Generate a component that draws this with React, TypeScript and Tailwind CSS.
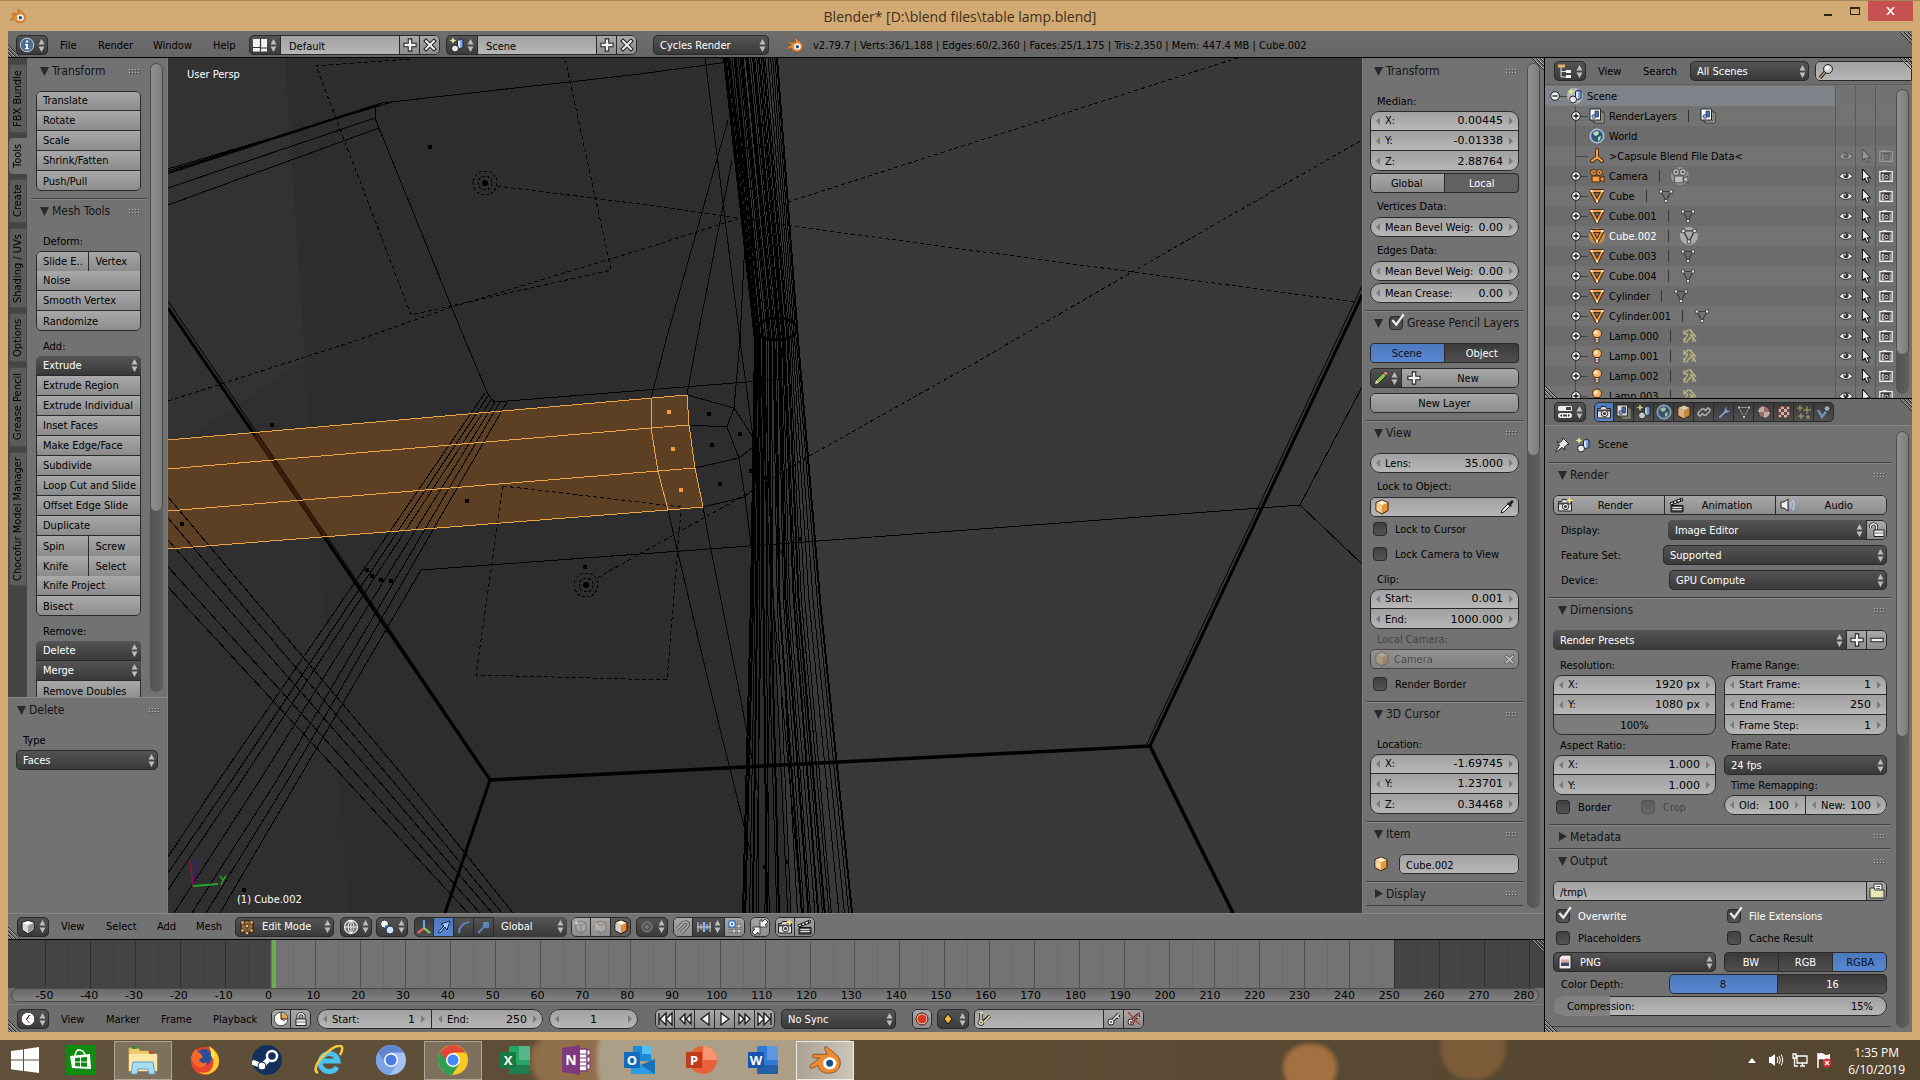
import type { ReactNode } from "react";

/* ---------- shared class strings ---------- */

const EDGE = "outline outline-1 -outline-offset-1 outline-[#2a2a2a]";
const BTN = "bg-gradient-to-b from-[#a9a9a9] to-[#8b8b8b] text-black";
const NUM = "bg-gradient-to-b from-[#a0a0a0] to-[#b8b8b8] text-black";
const MENU = "bg-gradient-to-b from-[#555] to-[#393939] text-white";
const BLUE = "bg-gradient-to-b from-[#4c78bd] to-[#5a87d2] text-[#0b1220]";
const DARK = "bg-gradient-to-b from-[#393939] to-[#505050] text-white";

/* ---------- icons ---------- */

function Ico({ children, s = 16, className = "" }: { children: ReactNode; s?: number; className?: string }) {
  return (
    <svg width={s} height={s} viewBox="0 0 16 16" className={`shrink-0 ${className}`} aria-hidden="true">
      {children}
    </svg>
  );
}

function UpDown({ className = "" }: { className?: string }) {
  return (
    <svg width="7" height="15" viewBox="0 0 7 15" className={`shrink-0 ${className}`} aria-hidden="true">
      <path d="M3.5 1 6.5 6.5h-6zM3.5 14 6.5 8.5h-6z" fill="#bdbdbd" />
    </svg>
  );
}

function Arrow({ right = false }: { right?: boolean }) {
  return (
    <svg width="4" height="8" viewBox="0 0 4 8" className="shrink-0" aria-hidden="true">
      <path d={right ? "M0 0l4 4-4 4z" : "M4 0L0 4l4 4z"} fill="#7c7c7c" />
    </svg>
  );
}

const CubeIcon = ({ faded = false }: { faded?: boolean }) => (
  <Ico className={faded ? "opacity-50" : ""}>
    <path d="M8 1l6 2.5v8L8 15l-6-3.500v-8z" fill="#e8963c" stroke="#3a2005" />
    <path d="M8 1.600l5.300 2.200L8 6.200 2.700 3.800z" fill="#fdeed8" />
    <path d="M2.500 4.300L8 6.800v7.500l-5.500-3.100z" fill="#f8cf9c" />
  </Ico>
);

const EditCube = () => (
  <Ico>
    <path d="M8 1l6 2.500v8L8 15l-6-3.500v-8z" fill="#8f6a45" stroke="#2a1a08" />
    <path d="M8 6.800v7M3 4l5 2.800L13 4" stroke="#5a3c1c" fill="none" />
    <path d="M2 2h3v3H2zM11 2h3v3h-3zM6.500 5.500h3v3h-3zM2 10h3v3H2zM11 10h3v3h-3zM6.500 12.500h3v3h-3z" fill="#f3b97c" stroke="#3a2005" strokeWidth=".6" />
  </Ico>
);

const FaceCube = () => (
  <Ico>
    <path d="M8 1l6 2.500v8L8 15l-6-3.500v-8z" fill="#e88a26" stroke="#1c1206" />
    <path d="M8 1.600l5.300 2.200L8 6.200 2.700 3.800z" fill="#f1f1f1" />
    <path d="M2.500 4.300L8 6.800v7.500l-5.500-3.100z" fill="#cfcfcf" />
  </Ico>
);

const ViewCube = () => (
  <Ico>
    <path d="M8 1.500l6 2v7.500l-6 4-6-4V3.500z" fill="#d9d9d9" stroke="#111" />
    <path d="M8 6l5.500-2v6.800L8 14.300z" fill="#9a9a9a" />
    <path d="M2.500 3.800L8 2l5.500 1.800L8 5.900z" fill="#fff" />
  </Ico>
);

const CameraIcon = ({ spark = false, dim = false }: { spark?: boolean; dim?: boolean }) => (
  <Ico className={dim ? "opacity-30" : ""}>
    <path d="M1.500 4.500h3l1-2h4l1 2h4v9.500h-13z" fill="#ddd" stroke="#222" />
    <path d="M2 5.500h12v2H2z" fill="#444" />
    <circle cx="8.500" cy="9.500" r="3.200" fill="#eee" stroke="#222" />
    <circle cx="8.500" cy="9.500" r="1.600" fill="#3b3b3b" />
    {spark && <path d="M12.500 0l1 2.500L16 3.500l-2.500 1-1 2.500-1-2.500-2.500-1 2.500-1z" fill="#ffe36b" />}
  </Ico>
);

// the outliner's restrict-render toggle
const SnapIcon = ({ dim = false }: { dim?: boolean }) => (
  <Ico s={14} className={dim ? "opacity-30" : ""}>
    <path d="M1 3h14v11H1z" fill="#333" stroke="#f2f2f2" strokeWidth="1.500" />
    <path d="M4 1.500h5v2H4z" fill="#f2f2f2" />
    <path d="M3 5.500h3v7H3zM12 5.500h1.500v7H12z" fill="#bbb" />
    <circle cx="8.500" cy="9" r="3" fill="#d8b8b8" stroke="#222" />
    <circle cx="8.500" cy="9" r="1.300" fill="#333" />
  </Ico>
);

const SceneIcon = () => (
  <Ico>
    <path d="M4 0l1 2.500 2.500 1L5 4.500 4 7 3 4.500.5 3.500 3 2.500z" fill="#ece98a" />
    <path d="M8.500 3.500Q11 1 14 3v7.500q-2.500 2-5.500 0z" fill="#7fa5dc" stroke="#1d2b45" />
    <path d="M9 3.800l2 .8v6.500l-2-.8z" fill="#dbe8fb" />
    <circle cx="6" cy="11.500" r="3.500" fill="#e8e8e8" stroke="#222" />
  </Ico>
);

const LayersIcon = () => (
  <Ico>
    <path d="M5 5l10-1v11H5z" fill="#cfcfa4" stroke="#333" />
    <path d="M3 3h10v10H3z" fill="#eee" stroke="#333" />
    <path d="M1 1h10.500v11H1z" fill="#fff" stroke="#222" />
    <path d="M6 3h3.500v6H6z" fill="#4672b5" stroke="#1d2b45" strokeWidth=".7" />
    <circle cx="4.800" cy="8.500" r="1.900" fill="#8fb0de" stroke="#1d2b45" strokeWidth=".7" />
  </Ico>
);

const WorldIcon = () => (
  <Ico>
    <circle cx="8" cy="8" r="7" fill="#6c95b4" stroke="#c4d3e2" />
    <circle cx="8" cy="8" r="5.500" fill="#31566f" />
    <path d="M4 5q3-3 6-1l-1 3-3 1zM9 9l3-1-1 4-2 1z" fill="#b5dcb5" />
  </Ico>
);

const EmptyIcon = () => (
  <Ico>
    <path d="M8 2v7M8 9l-5 4M8 9l5 4" stroke="#512a08" strokeWidth="4" strokeLinecap="round" />
    <path d="M8 2v7M8 9l-5 4M8 9l5 4" stroke="#f5a55a" strokeWidth="2" strokeLinecap="round" />
  </Ico>
);

const MovieIcon = ({ grey = false }: { grey?: boolean }) => (
  <Ico s={grey ? 18 : 16}>
    {grey && <circle cx="8" cy="8" r="8" fill="#9a9a9a" />}
    <g fill={grey ? "#bbb" : "#f29a47"} stroke={grey ? "#555" : "#4a2608"}>
      <path d="M3 8h8v6H3z" />
      <path d="M11 10l4-2v6l-4-2z" />
      <circle cx="4.500" cy="4.500" r="3" />
      <circle cx="10.500" cy="4.500" r="3" />
    </g>
    <circle cx="4.500" cy="4.500" r="1" fill="#333" />
    <circle cx="10.500" cy="4.500" r="1" fill="#333" />
  </Ico>
);

const MeshIcon = ({ active = false }: { active?: boolean }) => (
  <Ico>
    {active && <circle cx="8" cy="8" r="8" fill="#c98a50" />}
    <path d="M2.500 3h11L8 13.500z" fill="none" stroke="#4a2a0a" strokeWidth="4" strokeLinejoin="round" />
    <path d="M2.500 3h11L8 13.500z" fill="none" stroke="#f0a050" strokeWidth="1.800" strokeLinejoin="round" />
    <path d="M1.500 2h2v2h-2zM12.500 2h2v2h-2zM7 12.500h2v2H7z" fill="#fff" />
  </Ico>
);

const MeshDataIcon = ({ active = false }: { active?: boolean }) => (
  <Ico s={active ? 18 : 16}>
    {active && <circle cx="8" cy="8" r="8" fill="#aaa" />}
    <path d="M3 3.500h10L8 13z" fill="none" stroke="#3c3c3c" strokeWidth="1.200" />
    <g fill="#dcdcdc" stroke="#333" strokeWidth=".7">
      <path d="M1.500 2h3v3h-3zM11.500 2h3v3h-3zM6.500 11.500h3v3h-3z" />
    </g>
  </Ico>
);

const LampIcon = () => (
  <Ico>
    <circle cx="8" cy="5.500" r="4.500" fill="#f8b36b" stroke="#4d2a08" />
    <circle cx="7" cy="4.500" r="2" fill="#fde3c0" />
    <path d="M6 9.500h4V14q-2 2-4 0z" fill="#ddd" stroke="#4d2a08" />
    <path d="M6 12h4" stroke="#555" />
  </Ico>
);

const LampDataIcon = () => (
  <Ico>
    <g stroke="#c2bc80" strokeWidth="1.200" fill="none">
      <path d="M2 2v4h4M2 6l4-4 4 0M8 2l6 7M6 6l-4 7M2 10v4h4M8 6l3 3v5M11 9l3 5M5 13l6-6" />
    </g>
  </Ico>
);

const EyeIcon = ({ dim = false }: { dim?: boolean }) => (
  <Ico s={14} className={dim ? "opacity-30" : ""}>
    <path d="M0 8.500q8-9 16 0-8 7-16 0z" fill="#f2f2f2" stroke="#222" />
    <circle cx="8" cy="7.500" r="3" fill="#333" />
    <circle cx="7" cy="6.500" r="1" fill="#ddd" />
  </Ico>
);

const CursorIcon = ({ dim = false }: { dim?: boolean }) => (
  <Ico s={14} className={dim ? "opacity-30" : ""}>
    <path d="M4 0v13l3-2.500 2 5 2.500-1-2-4.500H13z" fill="#f2f2f2" stroke="#1b1b1b" strokeWidth="1.200" />
  </Ico>
);

const TreeIcon = () => (
  <Ico>
    <path d="M4 4v10h5M4 8.500h5" stroke="#ddd" fill="none" />
    <path d="M1 1.500h7v3H1z" fill="#e0b36a" />
    <path d="M9 7h5v3H9zM9 12h5v3H9z" fill="#f2f2f2" />
  </Ico>
);

const PropsIcon = () => (
  <Ico>
    <rect x="1" y="2" width="14" height="5" rx="1.500" fill="#f0f0f0" />
    <path d="M9 3h5v3H9z" fill="#444" />
    <rect x="1" y="9" width="14" height="5" rx="2.500" fill="#f0f0f0" />
    <path d="M3 11.500l2-1.500v3zM13 11.500L11 10v3z" fill="#333" />
    <path d="M6 10.500h4v2H6z" fill="#444" />
  </Ico>
);

const InfoIcon = () => (
  <Ico>
    <circle cx="8" cy="8" r="6.800" fill="#4b6d92" stroke="#c8d5e2" />
    <path d="M7 3.500h2v2H7zM6 7h3v4h1v1.200H6V11h1V8.200H6z" fill="#fff" />
  </Ico>
);

const LayoutIcon = () => (
  <Ico>
    <path d="M1 2h14v12.500H1z" fill="#f3f3f3" />
    <path d="M8.500 2v12.500M1 10.500h7.500M8.500 11h6.500" stroke="#333" strokeWidth="1.200" />
  </Ico>
);

const PlusIcon = () => (
  <Ico s={14}>
    <path d="M6 1h4v5h5v4h-5v5H6v-5H1V6h5z" fill="#f0f0f0" stroke="#222" strokeWidth="1.200" />
  </Ico>
);

const MinusIcon = () => (
  <Ico s={14}>
    <path d="M1 6h14v4H1z" fill="#f0f0f0" stroke="#222" strokeWidth="1.200" />
  </Ico>
);

const XIcon = ({ s = 14 }: { s?: number }) => (
  <Ico s={s}>
    <path d="M3.500 1L8 5.500 12.500 1 15 3.500 10.500 8l4.500 4.500-2.500 2.500L8 10.500 3.500 15 1 12.500 5.500 8 1 3.500z" fill="#f0f0f0" stroke="#222" strokeWidth="1.200" />
  </Ico>
);

const ClockIcon = ({ pie = false }: { pie?: boolean }) => (
  <Ico>
    <circle cx="8" cy="8" r="6.800" fill="#fff" stroke="#444" />
    {pie ? <path d="M8 8V2a6 6 0 0 1 6 6z" fill="#ee9f3a" /> : null}
    <path d={pie ? "M8 8l4 2" : "M9.500 4L6.500 8.500l3 3.500"} stroke="#a22" fill="none" />
    <path d={pie ? "M8 2v6h6" : "M9.500 4L6.500 8.500"} stroke="#222" fill="none" />
  </Ico>
);

const ClapIcon = () => (
  <Ico>
    <path d="M1 6l12-5 1 2.500L2 8z" fill="#f2f2f2" stroke="#111" />
    <path d="M4 5l1 2M7.500 3.500l1 2M11 2l1 2" stroke="#111" strokeWidth="1.500" />
    <path d="M2 8.500h12V15H2z" fill="#555" stroke="#111" />
    <path d="M3.500 10.500h9M3.500 12.500h9" stroke="#ddd" />
  </Ico>
);

const SpeakerIcon = () => (
  <Ico>
    <path d="M1 5h3l4-3v12l-4-3H1z" fill="#eee" stroke="#222" />
    <path d="M10 5q2 3 0 6M12.500 3q3 5 0 10" stroke="#a9c6ef" strokeWidth="1.600" fill="none" />
  </Ico>
);

const GlobeGrid = () => (
  <Ico>
    <circle cx="8" cy="8" r="6.500" fill="#6c6c6c" stroke="#f0f0f0" strokeWidth="1.300" />
    <path d="M1.500 8h13M8 1.500v13M8 1.500q-6 6.500 0 13M8 1.500q6 6.500 0 13" stroke="#f0f0f0" fill="none" />
  </Ico>
);

const PivotIcon = () => (
  <Ico>
    <circle cx="5.500" cy="5" r="4" fill="#f3f3f3" stroke="#234" />
    <circle cx="11" cy="11" r="4" fill="#d5e3f7" stroke="#234" />
    <circle cx="7.500" cy="8" r="1.700" fill="#2c5cae" />
  </Ico>
);

const AxisIcon = () => (
  <Ico>
    <path d="M8 1v8" stroke="#6aa3ff" strokeWidth="2" />
    <path d="M8 9l-6 5" stroke="#ff6a5a" strokeWidth="2" />
    <path d="M8 9l6 5" stroke="#7ddc5c" strokeWidth="2" />
  </Ico>
);

const KeyIcon = ({ red = false }: { red?: boolean }) => (
  <Ico>
    <path d="M7 9l6-6M11 5l2 2" stroke="#222" strokeWidth="3.500" />
    <circle cx="5" cy="11" r="3" fill="#eee" stroke="#222" />
    <path d="M7 9l6-6M11 5l2 2" stroke="#eee" strokeWidth="1.500" />
    <circle cx="5" cy="11" r="1" fill="#444" />
    {red && <path d="M2 1l12 13M14 1L4 14" stroke="#b54848" strokeWidth="1.800" />}
  </Ico>
);

const KeySetIcon = () => (
  <Ico>
    <path d="M5 9V2M8 10l6-5" stroke="#222" strokeWidth="3.500" />
    <circle cx="5" cy="11.500" r="3" fill="#f1edc0" stroke="#222" />
    <path d="M5 9V2h2M8 11l6-6" stroke="#f1edc0" strokeWidth="1.500" fill="none" />
    <circle cx="5" cy="11.500" r="1" fill="#444" />
  </Ico>
);

const FolderIcon = () => (
  <Ico>
    <path d="M5 1h8v9H5z" fill="#f6f6f6" stroke="#333" />
    <path d="M7 3.500h4M7 5.500h4" stroke="#666" />
    <path d="M1 5h4l1 2h9v8H1z" fill="#e8e5b8" stroke="#333" />
  </Ico>
);

const LockIcon = ({ open = false }: { open?: boolean }) => (
  <Ico>
    <path d={open ? "M1.500 6V3.500q3-3.500 6 0V8" : "M5 8V4.500q3-4 6 0V8"} fill="none" stroke="#222" strokeWidth="3" />
    <path d={open ? "M1.500 6V3.500q3-3.500 6 0V8" : "M5 8V4.500q3-4 6 0V8"} fill="none" stroke="#eee" strokeWidth="1.300" />
    <path d={open ? "M5 8h10v6.500H5z" : "M3 8h10v6.500H3z"} fill="#eee" stroke="#222" />
    <path d={open ? "M6 11h8" : "M4 11h8"} stroke="#777" />
  </Ico>
);

const DropperIcon = () => (
  <Ico>
    <path d="M2 14l1-3 6-6 2 2-6 6z" fill="#eee" stroke="#222" />
    <path d="M8 4l1-1 1 1 2-2.500q2.500-1 2.500 1.500L12 6l1 1-1 1z" fill="#222" />
  </Ico>
);

const PencilIcon = () => (
  <Ico>
    <path d="M2 14l1-4 8-8 3 3-8 8z" fill="#8cc152" stroke="#222" />
    <path d="M10 3l3 3 2-2.500L12.500 1z" fill="#e88a7a" stroke="#222" strokeWidth=".6" />
    <path d="M2 14l1-4 3 3z" fill="#f4dca8" />
  </Ico>
);

const PinIcon = () => (
  <Ico>
    <path d="M9 1l6 6-2 .5-2.500 2.500.5 3-3-2.500L2 15l-.5-.5L5.500 8 3 5l3 .5L8.500 3z" fill="#e8e8e8" stroke="#222" />
  </Ico>
);

const GlassIcon = () => (
  <Ico>
    <path d="M7 9l-5 6" stroke="#222" strokeWidth="3.500" />
    <path d="M7 9l-5 6" stroke="#c98a5a" strokeWidth="1.500" />
    <circle cx="10" cy="6" r="4.500" fill="#cfcfcf" stroke="#222" />
    <circle cx="9" cy="5" r="2" fill="#fff" />
  </Ico>
);

const ImageIcon = () => (
  <Ico>
    <path d="M5 1h9v14H2V4z" fill="#f2ece8" stroke="#222" />
    <path d="M4 5.500h8v3H4z" fill="#d9a9a0" />
    <path d="M4 8.500h8V12H4z" fill="#3c466b" />
  </Ico>
);

const BlenderLogo = ({ s = 16 }: { s?: number }) => (
  <svg width={s} height={s} viewBox="0 0 24 24" className="shrink-0" aria-hidden="true">
    <path
      d="M11.500 2.500q1-1 2.200 0l7 5.700Q24 11 23.500 15q-1 6.500-8.500 7-7 0-8.500-6L3 18q-1.800.6-2.500-.6 0-1 .8-1.700L8 10.500H4q-1.600-.3-1.500-1.500.3-1.200 1.700-1.300h9.300z"
      fill="#ee8a34"
      stroke="#7a4410"
      strokeWidth=".6"
    />
    <ellipse cx="15.500" cy="14.500" rx="5" ry="4.600" fill="#fff" />
    <circle cx="15.500" cy="14.500" r="2.600" fill="#1c4f86" />
  </svg>
);

/* ---------- widgets ---------- */

function Select({ value, label, icon, className = "" }: { value: string; label: string; icon?: ReactNode; className?: string }) {
  return (
    <span className={`relative flex h-5 min-w-0 items-center ${MENU} ${className}`}>
      {icon && <span className="pl-1">{icon}</span>}
      <select aria-label={label} defaultValue={value} className="h-full w-full min-w-0 appearance-none bg-transparent pl-[7px] pr-4 pt-[2px] text-white outline-none">
        <option>{value}</option>
      </select>
      <UpDown className="pointer-events-none absolute right-[3px]" />
    </span>
  );
}

function Drop({ icon, label, className = "w-8" }: { icon: ReactNode; label: string; className?: string }) {
  return (
    <button aria-label={label} className={`flex h-5 shrink-0 items-center justify-between px-[3px] ${MENU} ${className}`}>
      {icon}
      <UpDown />
    </button>
  );
}

function IconBtn({ icon, label, className = BTN }: { icon: ReactNode; label: string; className?: string }) {
  return (
    <button aria-label={label} className={`flex h-5 w-5 shrink-0 items-center justify-center ${className}`}>
      {icon}
    </button>
  );
}

function Num({ label, value, className = "" }: { label: string; value: string; className?: string }) {
  return (
    <label className={`flex h-5 min-w-0 items-center px-[6px] ${NUM} ${className}`}>
      <Arrow />
      <span className="ml-[5px] shrink-0 whitespace-pre pt-[2px]">{label}</span>
      <input defaultValue={value} className="mr-[6px] w-0 min-w-0 flex-1 bg-transparent pt-[2px] text-right font-['DejaVu_Sans',sans-serif] outline-none" />
      <Arrow right />
    </label>
  );
}

function Stack({ children, round = "rounded-[5px]", className = "" }: { children: ReactNode; round?: string; className?: string }) {
  return (
    <div className={`flex flex-col overflow-hidden [&>*]:border-b [&>*]:border-[#2a2a2a] [&>*:last-child]:border-b-0 ${EDGE} ${round} ${className}`}>
      {children}
    </div>
  );
}

function Row({ children, round = "rounded-[5px]", className = "" }: { children: ReactNode; round?: string; className?: string }) {
  return (
    <div className={`flex shrink-0 overflow-hidden [&>*]:border-r [&>*]:border-[#2a2a2a] [&>*:last-child]:border-r-0 ${EDGE} ${round} ${className}`}>
      {children}
    </div>
  );
}

function TextBtn({ children, tone = BTN, className = "w-1/2" }: { children: ReactNode; tone?: string; className?: string }) {
  return <button className={`h-5 pt-[2px] text-center ${tone} ${className}`}>{children}</button>;
}

function ToolBtn({ children, className = "" }: { children: ReactNode; className?: string }) {
  return <button className={`h-5 truncate pl-[7px] pt-[2px] text-left ${BTN} ${className}`}>{children}</button>;
}

function ToolPair({ a, b }: { a: string; b: string }) {
  return (
    <div className="flex h-5">
      <ToolBtn className="w-1/2 border-r border-[#2a2a2a]">{a}</ToolBtn>
      <ToolBtn className="w-1/2">{b}</ToolBtn>
    </div>
  );
}

function Check({ label, checked = false, dim = false, className = "" }: { label: string; checked?: boolean; dim?: boolean; className?: string }) {
  return (
    <label className={`flex h-5 items-center pl-[3px] ${dim ? "opacity-40" : ""} ${checked ? "text-white" : "text-black"} ${className}`}>
      <span className="relative h-[14px] w-[14px] shrink-0">
        <input type="checkbox" defaultChecked={checked} className={`peer block h-[14px] w-[14px] appearance-none rounded-[4px] bg-gradient-to-b from-[#404040] to-[#555] ${EDGE}`} />
        <svg viewBox="0 0 14 14" className="pointer-events-none absolute -top-1 left-px hidden h-4 w-4 peer-checked:block" aria-hidden="true">
          <path d="M2 7l3.500 4L12 2" fill="none" stroke="#e8e8e8" strokeWidth="2" />
        </svg>
      </span>
      <span className="ml-2 truncate pt-[2px]">{label}</span>
    </label>
  );
}

function Grip() {
  return (
    <svg width="11" height="5" viewBox="0 0 11 5" className="shrink-0" aria-hidden="true">
      <path d="M0 .5h11M0 3.500h11" stroke="#b5b5b5" strokeDasharray="1 2" />
      <path d="M1 1.500h10M1 4.500h10" stroke="#444" strokeDasharray="1 2" />
    </svg>
  );
}

function Panel({ title, children, closed = false, first = false, check = false, inset = "" }: { title: string; children?: ReactNode; closed?: boolean; first?: boolean; check?: boolean; inset?: string }) {
  return (
    <section className={`${first ? "" : "border-t border-t-[#3f3f3f] shadow-[inset_0_1px_0_#8a8a8a]"} ${closed ? "" : "pb-[7px]"}`}>
      <h2 className={`flex items-center pl-[9px] pr-[6px] text-[12px] text-[#141414] ${closed ? "h-[23px]" : "h-6"}`}>
        <svg width="9" height="9" viewBox="0 0 9 9" className="mr-[3px] shrink-0" aria-hidden="true">
          <path d={closed ? "M1 0l8 4.500L1 9z" : "M0 0h9L4.500 9z"} fill="#2a2a2a" />
        </svg>
        {check && <Check label="" checked className="-mr-1" />}
        <span className="flex-1 whitespace-nowrap">{title}</span>
        {!check && <Grip />}
      </h2>
      {!closed && <div className={`pt-2 ${inset}`}>{children}</div>}
    </section>
  );
}

function Label({ children, className = "" }: { children: ReactNode; className?: string }) {
  return <div className={`flex h-5 items-center whitespace-nowrap pl-[7px] pt-[2px] ${className}`}>{children}</div>;
}

function Scroll({ thumb, className = "" }: { thumb: string; className?: string }) {
  return (
    <div className={`w-[13px] shrink-0 rounded-full bg-gradient-to-r from-[#525252] to-[#606060] ${className}`}>
      <div className={`w-full rounded-full bg-gradient-to-r from-[#929292] to-[#7c7c7c] outline outline-1 -outline-offset-1 outline-[#4a4a4a] ${thumb}`} />
    </div>
  );
}

function Corner({ className = "" }: { className?: string }) {
  return (
    <svg width="12" height="12" viewBox="0 0 12 12" className={`pointer-events-none absolute ${className}`} aria-hidden="true">
      <path d="M0 0l12 12M4 0l8 8M8 0l4 4" stroke="#222" />
      <path d="M1 0l11 11M5 0l7 7M9 0l3 3" stroke="#bbb" strokeWidth=".8" />
    </svg>
  );
}

function CornerLow() {
  return (
    <svg width="12" height="12" viewBox="0 0 12 12" className="pointer-events-none absolute bottom-0 left-0" aria-hidden="true">
      <path d="M0 0l12 12M0 4l8 8M0 8l4 4" stroke="#222" />
      <path d="M0 1l11 11M0 5l7 7M0 9l3 3" stroke="#bbb" strokeWidth=".8" />
    </svg>
  );
}

function MenuText({ children, className }: { children: ReactNode; className: string }) {
  return <button className={`h-5 shrink-0 pt-[2px] text-left text-black ${className}`}>{children}</button>;
}

/* ---------- top bars ---------- */

function TitleBar() {
  return (
    <header className="relative flex h-[31px] shrink-0 items-center border-t border-[#a9865a] bg-[#d2aa74] font-['Open_Sans','Noto_Sans',sans-serif] text-[14px] text-[#3d2f1a]">
      <span className="pl-[10px]"><BlenderLogo s={16} /></span>
      <h1 className="min-w-0 flex-1 truncate pr-[26px] text-center">Blender* [D:\blend files\table lamp.blend]</h1>
      <div className="absolute right-[7px] top-0 flex h-5 items-center">
        <button aria-label="Minimize" className="flex h-5 w-[26px] items-center justify-center"><span className="mt-2 h-[2px] w-2 bg-[#2f2412]" /></button>
        <button aria-label="Maximize" className="flex h-5 w-[27px] items-center justify-center"><span className="h-2 w-[10px] border border-t-2 border-[#2f2412]" /></button>
        <button aria-label="Close" className="flex h-5 w-[45px] items-center justify-center bg-[#c75050]">
          <svg width="9" height="8" viewBox="0 0 9 8"><path d="M1 0l7 8M8 0L1 8" stroke="#fff" strokeWidth="1.600" /></svg>
        </button>
      </div>
    </header>
  );
}

function IdField({ icon, value, label }: { icon: ReactNode; value: string; label: string }) {
  return (
    <Row>
      <Drop icon={icon} label={`Browse ${label}`} />
      <input aria-label={label} defaultValue={value} className={`h-5 w-[119px] pl-2 pt-[2px] outline-none ${NUM}`} />
      <IconBtn icon={<PlusIcon />} label={`Add ${label}`} />
      <IconBtn icon={<XIcon />} label={`Remove ${label}`} />
    </Row>
  );
}

function InfoHeader() {
  return (
    <nav className="relative flex h-[27px] shrink-0 items-center border-b border-black bg-gradient-to-b from-[#6e6e6e] to-[#666] pl-2 pt-[2px]">
      <Row className="mr-3"><Drop icon={<InfoIcon />} label="Editor type" /></Row>
      <MenuText className="w-[38px]">File</MenuText>
      <MenuText className="w-[55px]">Render</MenuText>
      <MenuText className="w-[60px]">Window</MenuText>
      <MenuText className="w-9">Help</MenuText>
      <IdField icon={<LayoutIcon />} value="Default" label="screen layout" />
      <div className="w-[6px]" />
      <IdField icon={<SceneIcon />} value="Scene" label="scene" />
      <Select value="Cycles Render" label="Render engine" className={`ml-4 w-[116px] rounded-[5px] ${EDGE}`} />
      <div className="ml-[18px] mr-[10px]"><BlenderLogo /></div>
      <p className="truncate pt-[2px]">v2.79.7 | Verts:36/1,188 | Edges:60/2,360 | Faces:25/1,175 | Tris:2,350 | Mem: 447.4 MB | Cube.002</p>
      <Corner className="right-0 top-px" />
      <CornerLow />
    </nav>
  );
}

/* ---------- tool shelf ---------- */

const TABS = [
  { name: "FBX Bundle", h: "h-[69px]" },
  { name: "Tools", h: "h-9" },
  { name: "Create", h: "h-11" },
  { name: "Shading / UVs", h: "h-20" },
  { name: "Options", h: "h-[49px]" },
  { name: "Grease Pencil", h: "h-20" },
  { name: "Chocofur Model Manager", h: "h-[134px]" },
];

function ToolShelf() {
  return (
    <aside className="flex w-[160px] shrink-0 flex-col border-r border-[#808080] bg-[#727272]">
      <div className="flex h-[639px] overflow-hidden">
        <div className="flex w-[19px] shrink-0 flex-col gap-[5px] bg-[#454545] pt-[6px]">
          {TABS.map((t) => (
            <button
              key={t.name}
              className={`ml-px flex w-[18px] shrink-0 rotate-180 items-center justify-center whitespace-nowrap rounded-r-[4px] [writing-mode:vertical-rl] ${t.h} ${
                t.name === "Tools" ? "bg-[#727272]" : "bg-[#5c5c5c] outline outline-1 -outline-offset-1 outline-[#4b4b4b]"
              }`}
            >
              {t.name}
            </button>
          ))}
        </div>
        <div className="w-[123px] shrink-0 px-1 pt-px">
          <Panel title="Transform" first inset="px-[5px]">
            <Stack>
              {["Translate", "Rotate", "Scale", "Shrink/Fatten", "Push/Pull"].map((n) => <ToolBtn key={n}>{n}</ToolBtn>)}
            </Stack>
          </Panel>
          <Panel title="Mesh Tools" inset="px-[5px]">
            <Label>Deform:</Label>
            <Stack>
              <ToolPair a="Slide E.." b="Vertex" />
              {["Noise", "Smooth Vertex", "Randomize"].map((n) => <ToolBtn key={n}>{n}</ToolBtn>)}
            </Stack>
            <Label className="mt-[5px]">Add:</Label>
            <Stack>
              <Select value="Extrude" label="Extrude" />
              {["Extrude Region", "Extrude Individual", "Inset Faces", "Make Edge/Face", "Subdivide", "Loop Cut and Slide", "Offset Edge Slide", "Duplicate"].map((n) => (
                <ToolBtn key={n}>{n}</ToolBtn>
              ))}
              <ToolPair a="Spin" b="Screw" />
              <ToolPair a="Knife" b="Select" />
              <ToolBtn>Knife Project</ToolBtn>
              <ToolBtn>Bisect</ToolBtn>
            </Stack>
            <Label className="mt-[5px]">Remove:</Label>
            <Stack>
              <Select value="Delete" label="Delete" />
              <Select value="Merge" label="Merge" />
              <ToolBtn>Remove Doubles</ToolBtn>
            </Stack>
          </Panel>
        </div>
        <Scroll className="my-[5px]" thumb="h-[449px]" />
      </div>
      <div className="flex-1 border-t border-[#8a8a8a] pr-px">
        <Panel title="Delete" first inset="px-2">
          <Label>Type</Label>
          <Select value="Faces" label="Type" className={`rounded-[5px] ${EDGE}`} />
        </Panel>
      </div>
    </aside>
  );
}

/* ---------- 3D view ---------- */

const THIN = [
  "168,171 382,103 640,74 728,62",
  "168,169 392,102",
  "168,188 375,118",
  "168,205 379,128",
  "375,106 375,118 379,128 465,340 487,392 491,399 495,402 785,379",
  "485,393 219,780 168,857",
  "488,396 232,780 168,873",
  "491,400 242,780 168,890",
  "495,402 260,780 174,913",
  "500,402 277,780 192,913",
  "507,402 288,780 206,913",
  "900,535 421,570 298,780 220,913",
  "900,535 1300,505 1362,387",
  "1300,505 1362,564",
  "168,497 400,772 513,913",
  "168,518 392,780 502,913",
  "168,540 378,780 492,913",
  "168,567 362,780 480,913",
  "168,587 346,780 468,913",
  "705,58 740,340 753,437",
  "728,120 666,340 651,399",
  "732,160 697,340 687,395",
  "745,240 740,340 734,408 727,427 739,458 745,497 751,545",
  "687,395 734,408 753,437",
  "689,425 727,427",
  "695,468 739,458 753,447",
  "703,507 745,497 752,490",
  "668,510 678,553 708,680 752,858",
  "703,507 711,550 737,680 758,790",
];

const DASHED = [
  "410,59 316,66 411,315 611,270 565,58",
  "168,401 355,341 452,307 640,250 740,218 788,202 1237,58",
  "497,186 640,204 738,218 785,225 1132,272 1362,303",
  "597,578 750,492 811,455 900,405 980,360 1132,272 1362,140",
  "503,486 476,675 667,680 681,510",
  "503,486 681,507",
];

const DOTS = [
  [430, 147], [709, 414], [712, 445], [740, 434], [720, 484], [467, 501], [585, 567], [272, 425], [182, 524],
  [367, 570], [372, 576], [381, 580], [391, 581], [751, 471], [765, 478], [777, 479], [785, 379], [244, 890],
  [765, 867], [787, 862], [783, 552], [800, 539], [760, 125],
];

// vertical wires of the lamp post: [top, waist, middle, foot] as shares of its width
const POST = [
  [0, 0, 0, 0, 2], [0.03, 0.03, 0.03, 0.02, 2], [0.07, 0.06, 0.06, 0.06, 1], [0.1, 0.1, 0.09, 0.09, 2],
  [0.15, 0.13, 0.12, 0.14, 1], [0.19, 0.17, 0.15, 0.12, 1], [0.22, 0.2, 0.18, 0.22, 2], [0.27, 0.25, 0.22, 0.24, 1],
  [0.3, 0.3, 0.24, 0.31, 1], [0.33, 0.34, 0.29, 0.33, 2], [0.36, 0.38, 0.32, 0.41, 1], [0.41, 0.42, 0.38, 0.44, 1],
  [0.44, 0.45, 0.41, 0.54, 2], [0.46, 0.5, 0.42, 0.5, 1], [0.5, 0.54, 0.47, 0.56, 1], [0.55, 0.57, 0.5, 0.6, 2],
  [0.58, 0.6, 0.53, 0.62, 1], [0.62, 0.64, 0.56, 0.66, 1], [0.66, 0.67, 0.62, 0.69, 2], [0.7, 0.7, 0.65, 0.73, 1],
  [0.74, 0.76, 0.69, 0.75, 2], [0.78, 0.8, 0.73, 0.79, 1], [0.83, 0.84, 0.78, 0.81, 1], [0.88, 0.88, 0.84, 0.88, 1],
  [0.92, 0.92, 0.9, 0.93, 1], [0.96, 0.96, 0.96, 0.97, 1], [1, 1, 1, 1, 2], [0.1, 0.2, 0.32, 0.54, 1], [0.2, 0.1, 0.3, 0.2, 1],
].map(([a, b, c, d, w]) => ({
  pts: `${724 + 53 * a},58 ${755 + 43 * b},340 ${751 + 69 * c},600 ${743 + 109 * d},913`,
  w,
}));

function Viewport() {
  return (
    <main className="relative min-w-0 flex-1 overflow-hidden bg-[#2d2d2d] text-white">
      <svg viewBox="168 58 1194 855" preserveAspectRatio="xMidYMid slice" className="absolute h-full w-full" aria-label="3D view">
        <path d="M168 58h117l20 302 45 553H168z" fill="#2f2f2f" />
        <path d="M168 58h117l20 302-137 90z" fill="#323232" />
        <path d="M740 58h622v855H790l-30-573z" fill="#383838" />
        <path d="M168 440L687 395l2 30 6 43 8 39-535 42z" fill="#5d4023" />
        <g fill="none" stroke="#000" shapeRendering="crispEdges">
          {THIN.map((p) => <polyline key={p} points={p} />)}
          {DASHED.map((p) => <polyline key={p} points={p} strokeDasharray="4 3" />)}
          {POST.map((l) => <polyline key={l.pts} points={l.pts} strokeWidth={l.w} />)}
          <ellipse cx="777" cy="329" rx="20" ry="11" strokeWidth="3" />
          <circle cx="485" cy="183" r="12" strokeDasharray="3 2" />
          <circle cx="485" cy="183" r="7" strokeDasharray="3 2" />
          <circle cx="586" cy="585" r="12" strokeDasharray="3 2" />
          <circle cx="586" cy="585" r="7" strokeDasharray="3 2" />
        </g>
        <path d="M582 597l-22 78M474 193L240 358" stroke="#323232" />
        <g fill="none" stroke="#000">
          <path d="M168 308L490 780" strokeWidth="3" />
          <path d="M168 301L490 778" />
          <path d="M490 780L1150 746 1233 913" strokeWidth="3.500" />
          <path d="M490 780L445 913" strokeWidth="3" />
          <path d="M1150 746L1362 295" strokeWidth="3" />
          <path d="M1147 744L1362 286" />
          <path d="M168 173L380 104" strokeWidth="2" />
        </g>
        <path d="M255 435L326 537" stroke="#3a1c05" strokeWidth="4" />
        {DOTS.map(([x, y]) => <rect key={`${x}-${y}`} x={x - 2} y={y - 2} width="4" height="4" />)}
        <circle cx="485" cy="183" r="3" />
        <circle cx="586" cy="585" r="3" />
        <g fill="none" stroke="#eda443" shapeRendering="crispEdges">
          <path d="M168 440L687 395M168 469L651 428 689 425M168 511L658 471 695 468M168 549L668 510 703 507" />
          <path d="M651 399v29l7 43 10 39M687 395l2 30 6 43 8 39" />
        </g>
        <g fill="#f79a3e">
          <path d="M667 410h4v4h-4zM671 447h4v4h-4zM679 488h4v4h-4z" />
        </g>
        <g fill="none" strokeWidth="1.500">
          <path d="M193 886l-3-24" stroke="#8e1740" />
          <path d="M193 886l5-26M194 862l4-3" stroke="#3a1c78" />
          <path d="M193 886l25-2" stroke="#28a428" strokeWidth="2" />
          <path d="M220 876l3 4 3-4M223 880l-2 5" stroke="#28a428" />
        </g>
      </svg>
      <p className="absolute left-[19px] top-[9px]">User Persp</p>
      <p className="absolute bottom-[5px] left-[69px]">(1) Cube.002</p>
    </main>
  );
}

/* ---------- properties region of the 3D view ---------- */

function SideRegion() {
  return (
    <aside className="relative flex w-[182px] shrink-0 border-l border-[#808080] bg-[#727272]">
      <div className="min-w-0 flex-1 overflow-hidden pl-[3px] pr-1 pt-px [&_h2]:pl-2">
        <Panel title="Transform" first inset="px-1">
          <Label>Median:</Label>
          <Stack round="rounded-[9px]">
            <Num label="X:" value="0.00445" />
            <Num label="Y:" value="-0.01338" />
            <Num label="Z:" value="2.88764" />
          </Stack>
          <Row className="mt-[2px]" round="rounded-[4px]">
            <TextBtn>Global</TextBtn>
            <TextBtn tone="bg-[#616161] text-white">Local</TextBtn>
          </Row>
          <Label className="mt-[3px]">Vertices Data:</Label>
          <Stack className="mt-px" round="rounded-full"><Num label="Mean Bevel Weig:" value="0.00" /></Stack>
          <Label className="mt-[3px]">Edges Data:</Label>
          <Stack className="mt-px" round="rounded-full"><Num label="Mean Bevel Weig:" value="0.00" /></Stack>
          <Stack className="mt-[2px]" round="rounded-full"><Num label="Mean Crease:" value="0.00" /></Stack>
        </Panel>
        <Panel title="Grease Pencil Layers" check inset="px-1">
          <Row round="rounded-[4px]">
            <TextBtn tone={BLUE}>Scene</TextBtn>
            <TextBtn tone={DARK}>Object</TextBtn>
          </Row>
          <Row className="mt-[5px]">
            <Drop icon={<PencilIcon />} label="Browse grease pencil" />
            <button className={`flex h-5 flex-1 items-center pl-[5px] ${BTN}`}><PlusIcon /><span className="flex-1 pr-1 pt-[2px] text-center">New</span></button>
          </Row>
          <Row className="mt-[5px]"><TextBtn className="w-full">New Layer</TextBtn></Row>
        </Panel>
        <Panel title="View" inset="px-1">
          <Stack round="rounded-full"><Num label="Lens:" value="35.000" /></Stack>
          <Label className="mt-[3px]">Lock to Object:</Label>
          <Row className="mt-px">
            <label className={`flex h-5 w-full items-center justify-between px-1 ${NUM}`}>
              <CubeIcon />
              <input aria-label="Lock to Object" className="w-0 flex-1 bg-transparent outline-none" />
              <DropperIcon />
            </label>
          </Row>
          <Check className="mt-[2px]" label="Lock to Cursor" />
          <Check className="mt-[5px]" label="Lock Camera to View" />
          <Label className="mt-[5px]">Clip:</Label>
          <Stack round="rounded-[9px]">
            <Num label="Start:" value="0.001" />
            <Num label="End:" value="1000.000" />
          </Stack>
          <Label className="text-[#444]">Local Camera:</Label>
          <Row className="opacity-60">
            <label className={`flex h-5 w-full items-center justify-between px-1 ${BTN}`}>
              <CubeIcon faded />
              <input aria-label="Local Camera" defaultValue="Camera" className="ml-1 w-0 flex-1 bg-transparent pt-[2px] text-[#333] outline-none" />
              <XIcon s={11} />
            </label>
          </Row>
          <Check className="mt-[5px]" label="Render Border" />
        </Panel>
        <Panel title="3D Cursor" inset="px-1">
          <Label>Location:</Label>
          <Stack round="rounded-[9px]">
            <Num label="X:" value="-1.69745" />
            <Num label="Y:" value="1.23701" />
            <Num label="Z:" value="0.34468" />
          </Stack>
        </Panel>
        <Panel title="Item" inset="px-1">
          <div className="flex items-center gap-[10px] pl-[3px]">
            <CubeIcon />
            <input aria-label="Item name" defaultValue="Cube.002" className={`h-5 w-0 flex-1 rounded-[5px] pl-[7px] pt-[2px] ${NUM} ${EDGE}`} />
          </div>
        </Panel>
        <Panel title="Display" closed />
        <div className="border-t border-[#3f3f3f]" />
      </div>
      <Scroll className="my-[5px] mr-1" thumb="h-[393px]" />
      <Corner className="right-0 top-0" />
    </aside>
  );
}

function ViewHeader() {
  return (
    <nav className="relative flex h-[27px] shrink-0 items-center border-b border-t border-b-black border-t-[#868686] bg-[#727272] pl-[9px]">
      <Row className="mr-3"><Drop icon={<ViewCube />} label="Editor type" /></Row>
      <MenuText className="w-[45px]">View</MenuText>
      <MenuText className="w-[51px]">Select</MenuText>
      <MenuText className="w-[39px]">Add</MenuText>
      <MenuText className="w-[39px]">Mesh</MenuText>
      <Select value="Edit Mode" label="Mode" icon={<EditCube />} className={`w-[99px] rounded-[5px] ${EDGE}`} />
      <Row className="ml-[6px]"><Drop icon={<GlobeGrid />} label="Viewport shading" /></Row>
      <Row className="ml-1"><Drop icon={<PivotIcon />} label="Pivot point" /></Row>
      <Row className="ml-[6px]">
        <IconBtn icon={<AxisIcon />} label="Manipulator" className={DARK} />
        <IconBtn
          label="Translate"
          className={BLUE}
          icon={<Ico><path d="M2 13l6-6-3-2 9-3-3 9-2-3-5 6z" fill="#a9c9fa" stroke="#13294d" /></Ico>}
        />
        <IconBtn label="Rotate" className={MENU} icon={<Ico><path d="M3 14q0-9 10-11" fill="none" stroke="#5c83b8" strokeWidth="2" /></Ico>} />
        <IconBtn label="Scale" className={MENU} icon={<Ico><path d="M2 14l6-6" stroke="#5c83b8" strokeWidth="2" /><path d="M7 3h6v6H7z" fill="#5c83b8" /></Ico>} />
        <Select value="Global" label="Orientation" className="w-[73px]" />
      </Row>
      <Row className="ml-1">
        <IconBtn label="Vertex select" icon={<Ico className="opacity-50"><path d="M8 2l5 2v7l-5 3-5-3V4z" fill="#bbb" stroke="#555" /><path d="M3 4l5 2.500L13 4M8 6.500V14" fill="none" stroke="#666" /><circle cx="3.500" cy="4" r="1.500" fill="#fff" /></Ico>} />
        <IconBtn label="Edge select" icon={<Ico className="opacity-50"><path d="M8 2l5 2v7l-5 3-5-3V4z" fill="#bbb" stroke="#555" /><path d="M3 4l5 2.500L13 4" fill="none" stroke="#666" /><path d="M3.500 4v7.500" stroke="#fc9" strokeWidth="2" /></Ico>} />
        <IconBtn label="Face select" className="bg-[#5a5a5a]" icon={<FaceCube />} />
      </Row>
      <Row className="ml-[5px]">
        <Drop label="Proportional editing" icon={<Ico><circle cx="8" cy="8" r="5" fill="#555" stroke="#8a8a8a" /><circle cx="8" cy="8" r="2" fill="#777" /></Ico>} />
      </Row>
      <Row className="ml-[5px]">
        <IconBtn label="Snap" icon={<Ico><path d="M6 14l6-6q3-4-1-5-2 0-3 1L2 10" fill="none" stroke="#555" strokeWidth="3.500" /><path d="M6 14l6-6q3-4-1-5-2 0-3 1L2 10" fill="none" stroke="#aaa" strokeWidth="1.800" /></Ico>} />
        <Drop label="Snap element" icon={<Ico><path d="M2 3v10M5 5v6M11 5v6M14 3v10M1 8h14" stroke="#ddd" /><path d="M8 3v10" stroke="#7fb2ff" strokeWidth="2.500" /></Ico>} />
        <IconBtn label="Snap to grid" icon={<Ico><path d="M7 1v14M12 1v14M1 7h14M1 12h14" stroke="#333" strokeWidth="2.500" /><path d="M7 1v14M12 1v14M1 7h14M1 12h14" stroke="#fff" /><circle cx="5" cy="5" r="3.500" fill="#e8f0fc" stroke="#3a70c0" strokeWidth="1.500" /><circle cx="5" cy="5" r="1.200" fill="#3a70c0" /></Ico>} />
      </Row>
      <Row className="ml-[5px]">
        <IconBtn label="Auto merge" icon={<Ico><path d="M8 1v7h7V6h-2l3-3-3-3-3 3V1zM1 8h7v7H6v-2l-3 3-3-3 3-3H1z" fill="#f4f4f4" stroke="#222" strokeWidth=".8" /></Ico>} />
      </Row>
      <Row className="ml-[5px]">
        <IconBtn label="OpenGL render" icon={<CameraIcon spark />} />
        <IconBtn label="OpenGL animation" icon={<ClapIcon />} />
      </Row>
      <CornerLow />
    </nav>
  );
}

/* ---------- timeline ---------- */

const FRAMES = Array.from({ length: 34 }, (_, i) => -50 + i * 10);

function Timeline() {
  return (
    <section className="flex shrink-0 flex-col bg-[#6d6d6d]">
      <div className="relative h-12 bg-[#737373]">
        <svg viewBox="0 0 1536 48" preserveAspectRatio="none" className="block h-full w-full" aria-label="Timeline">
          <path d="M0 0h262v48H0zM1386 0h150v48h-150z" fill="#444" />
          {FRAMES.map((f) => (
            <g key={f} shapeRendering="crispEdges">
              <path d={`M${Math.round(262 + f * 4.496) + 0.5} 0v48`} stroke="#000" strokeOpacity=".3" />
              <path d={`M${Math.round(285 + f * 4.496) + 0.5} 0v48`} stroke="#000" strokeOpacity=".08" />
            </g>
          ))}
          <path d="M264 0h4v48h-4z" fill="#69b052" />
        </svg>
        <Corner className="right-0 top-0" />
      </div>
      <div className="ml-[3px] mr-[5px] h-[14px] rounded-full bg-gradient-to-b from-[#666] to-[#858585] pl-[11px] outline outline-1 -outline-offset-1 outline-[#4a4a4a]">
        <div className="-mr-[7px] flex pt-px font-['DejaVu_Sans',sans-serif]">
          {FRAMES.map((f) => (
            <span key={f} className="w-0 flex-1 text-center text-[11px] leading-[14px] text-black">{f}</span>
          ))}
        </div>
      </div>
      <nav className="relative mt-[2px] flex h-7 items-center border-t border-[#7c7c7c] pl-[9px] pt-px">
        <Row className="mr-3"><Drop icon={<ClockIcon />} label="Editor type" /></Row>
        <MenuText className="w-[45px]">View</MenuText>
        <MenuText className="w-[55px]">Marker</MenuText>
        <MenuText className="w-[52px]">Frame</MenuText>
        <MenuText className="w-[58px]">Playback</MenuText>
        <Row>
          <IconBtn icon={<ClockIcon pie />} label="Preview range" />
          <IconBtn icon={<LockIcon />} label="Lock time" />
        </Row>
        <Row className="ml-[6px]" round="rounded-full">
          <Num label="Start:" value="1" className="w-[115px]" />
          <Num label="End:" value="250" className="w-[111px]" />
        </Row>
        <label className={`ml-[6px] flex h-5 w-[89px] items-center rounded-full px-[6px] ${NUM} ${EDGE}`}>
          <Arrow />
          <input aria-label="Current frame" defaultValue="1" className="w-0 flex-1 bg-transparent pt-[2px] text-center font-['DejaVu_Sans',sans-serif] outline-none" />
          <Arrow right />
        </label>
        <Row className="ml-[17px]">
          {[
            ["Jump to start", "M2 2v12M9 2L3 8l6 6zM15 2L9 8l6 6z"],
            ["Previous keyframe", "M8 3L3 8l5 5zM14 3L9 8l5 5z"],
            ["Play reversed", "M12 2L4 8l8 6z"],
            ["Play", "M4 2l8 6-8 6z"],
            ["Next keyframe", "M2 3l5 5-5 5zM8 3l5 5-5 5z"],
            ["Jump to end", "M1 2l6 6-6 6zM7 2l6 6-6 6zM14 2v12"],
          ].map(([name, d]) => (
            <IconBtn key={name} label={name} icon={<Ico><path d={d} fill="#f6f6f6" stroke="#1b1b1b" strokeWidth="1.300" /></Ico>} />
          ))}
        </Row>
        <Select value="No Sync" label="Sync mode" className={`ml-[6px] w-[115px] rounded-[5px] ${EDGE}`} />
        <Row className="ml-4">
          <IconBtn label="Record" icon={<Ico><circle cx="8" cy="8" r="5" fill="#d9351c" stroke="#f3d0c8" /><circle cx="8" cy="8" r="6" fill="none" stroke="#5a1a10" /></Ico>} />
        </Row>
        <Row className="ml-[5px]">
          <Drop label="Keyframe type" icon={<Ico><path d="M8 3l4 5-4 5-4-5z" fill="#f1b637" stroke="#111" /></Ico>} />
        </Row>
        <Row className="ml-[5px]">
          <label className={`flex h-5 w-[130px] items-center px-[2px] ${NUM}`}>
            <KeySetIcon />
            <input aria-label="Keying set" className="w-0 flex-1 bg-transparent outline-none" />
          </label>
          <IconBtn icon={<KeyIcon />} label="Insert keyframes" />
          <IconBtn icon={<KeyIcon red />} label="Delete keyframes" />
        </Row>
        <CornerLow />
      </nav>
    </section>
  );
}

/* ---------- outliner ---------- */

type Kind = "layers" | "world" | "empty" | "camera" | "mesh" | "lamp";
const ITEMS: { name: string; kind: Kind; active?: boolean }[] = [
  { name: "RenderLayers", kind: "layers" },
  { name: "World", kind: "world" },
  { name: ">Capsule Blend File Data<", kind: "empty" },
  { name: "Camera", kind: "camera" },
  { name: "Cube", kind: "mesh" },
  { name: "Cube.001", kind: "mesh" },
  { name: "Cube.002", kind: "mesh", active: true },
  { name: "Cube.003", kind: "mesh" },
  { name: "Cube.004", kind: "mesh" },
  { name: "Cylinder", kind: "mesh" },
  { name: "Cylinder.001", kind: "mesh" },
  { name: "Lamp.000", kind: "lamp" },
  { name: "Lamp.001", kind: "lamp" },
  { name: "Lamp.002", kind: "lamp" },
  { name: "Lamp.003", kind: "lamp" },
];

function kindIcon(kind: Kind, active = false) {
  if (kind === "layers") return <LayersIcon />;
  if (kind === "world") return <WorldIcon />;
  if (kind === "empty") return <EmptyIcon />;
  if (kind === "camera") return <MovieIcon />;
  if (kind === "lamp") return <LampIcon />;
  return <MeshIcon active={active} />;
}

function dataIcon(kind: Kind, active = false) {
  if (kind === "layers") return <LayersIcon />;
  if (kind === "camera") return <MovieIcon grey />;
  if (kind === "lamp") return <LampDataIcon />;
  return <MeshDataIcon active={active} />;
}

function Expander({ minus = false }: { minus?: boolean }) {
  return (
    <svg width="10" height="10" viewBox="0 0 10 10" className="shrink-0" aria-hidden="true">
      <circle cx="5" cy="5" r="4.300" fill="#f0f0f0" stroke="#1a1a1a" />
      <path d={minus ? "M2.500 5h5" : "M2.500 5h5M5 2.500v5"} stroke="#111" strokeWidth="1.300" />
    </svg>
  );
}

const CELL = "flex h-5 w-5 items-center justify-center border-l border-[#5a5a5a]";

function Outliner() {
  return (
    <section className="relative flex h-[341px] shrink-0 flex-col border-b border-black bg-[#727272]">
      <nav className="flex h-[27px] shrink-0 items-center border-b border-[#5f5f5f] bg-[#6d6d6d] pl-[9px]">
        <Row className="mr-3"><Drop icon={<TreeIcon />} label="Editor type" /></Row>
        <MenuText className="w-[45px]">View</MenuText>
        <MenuText className="w-[47px]">Search</MenuText>
        <Select value="All Scenes" label="Display mode" className={`w-[119px] rounded-[5px] ${EDGE}`} />
        <label className={`ml-[6px] flex h-5 min-w-0 flex-1 items-center rounded-l-[5px] pl-[3px] ${NUM} ${EDGE}`}>
          <GlassIcon />
          <input aria-label="Search" className="w-0 flex-1 bg-transparent outline-none" />
        </label>
      </nav>
      <div className="relative flex min-h-0 flex-1 overflow-hidden pt-px">
        <ul className="relative h-full min-w-0 flex-1">
          <li className="flex h-5">
            <div className="flex min-w-0 flex-1 items-center bg-[#7d8388] pl-[5px]">
              <Expander minus />
              <span className="h-px w-[7px] bg-[#444]" />
              <span className="mr-[4px] rounded-full bg-[#b3b6ba]"><SceneIcon /></span>
              <span className="pt-[2px]">Scene</span>
            </div>
            <div className="flex w-[61px]">
              {[0, 1, 2].map((c) => <span key={c} className={CELL} />)}
            </div>
          </li>
          {ITEMS.map((it, i) => {
            const dim = it.kind === "empty";
            const leaf = dim || it.kind === "world";
            const toggles = it.kind !== "layers" && it.kind !== "world";
            return (
              <li key={it.name} className={`flex h-5 ${i % 2 ? "bg-[#6c6c6c]" : "bg-[#737373]"}`}>
                <div className={`flex min-w-0 flex-1 items-center bg-[linear-gradient(#484848,#484848)] bg-[length:1px_100%] bg-[position:30px_0] bg-no-repeat pl-[26px] ${it.active ? "text-white" : ""}`}>
                  {leaf ? <span className="w-[5px]" /> : <Expander />}
                  <span className={`mr-px h-px ${dim ? "w-3" : leaf ? "w-3 opacity-0" : "w-[7px]"} bg-[#444]`} />
                  {kindIcon(it.kind, it.active)}
                  <span className="ml-1 whitespace-nowrap pt-[2px]">{it.name}</span>
                  {!leaf && (
                    <>
                      <span className="mx-[11px] h-3 w-px bg-[#333]" />
                      {dataIcon(it.kind, it.active)}
                    </>
                  )}
                </div>
                <div className="flex w-[61px]">
                  <button aria-label={`Toggle visibility of ${it.name}`} className={CELL}>{toggles && <EyeIcon dim={dim} />}</button>
                  <button aria-label={`Toggle selection of ${it.name}`} className={CELL}>{toggles && <CursorIcon dim={dim} />}</button>
                  <button aria-label={`Toggle rendering of ${it.name}`} className={CELL}>{toggles && <SnapIcon dim={dim} />}</button>
                </div>
              </li>
            );
          })}
        </ul>
        <Scroll className="mb-1 mr-[3px] mt-[3px]" thumb="h-[266px]" />
      </div>
      <Corner className="right-0 top-0" />
      <CornerLow />
    </section>
  );
}

/* ---------- properties editor ---------- */

const CONTEXT_TABS: [string, ReactNode][] = [
  ["Render", <CameraIcon />],
  ["Render layers", <LayersIcon />],
  ["Scene", <SceneIcon />],
  ["World", <WorldIcon />],
  ["Object", <CubeIcon />],
  ["Constraints", <Ico><path d="M7 9L4 12q-3-1-1.500-3.500L6 5q2-.5 3 1M9 7l3-3q3 1 1.500 3.500L10 11q-2 .5-3-1" fill="none" stroke="#c6c6c6" strokeWidth="1.700" /></Ico>],
  ["Modifiers", <Ico><path d="M2 13l6-6q-.5-4 4-5l-1.500 3L12 6.500 14.500 5q0 4.500-5 4.500l-5.500 5.500z" fill="#8fabd6" stroke="#1c2b45" strokeWidth=".7" /></Ico>],
  ["Data", <Ico><path d="M3 3.500h10L8 13z" fill="none" stroke="#aaa" /><path d="M1.500 2h3v3h-3zM11.500 2h3v3h-3zM6.500 11.500h3v3h-3z" fill="#dcdcdc" stroke="#222" strokeWidth=".7" /></Ico>],
  ["Material", <Ico><circle cx="8" cy="8" r="6" fill="#b9716a" stroke="#222" /><path d="M8 2a6 6 0 0 0-6 6l6 0zM8 8h6a6 6 0 0 1-6 6z" fill="#d5c4c0" /></Ico>],
  ["Texture", <Ico><path d="M2 2h12v12H2z" fill="#e8d2cc" stroke="#222" /><path d="M2 2h3v3H2zM8 2h3v3H8zM5 5h3v3H5zM11 5h3v3h-3zM2 8h3v3H2zM8 8h3v3H8zM5 11h3v3H5zM11 11h3v3h-3z" fill="#7a4238" /></Ico>],
  ["Particles", <Ico><path d="M4 1v6M1 4h6M11 2v8M7 6h8M5 9v6M2 12h6M12 11v4M10 13h4" stroke="#c9c07c" /></Ico>],
  ["Physics", <Ico><path d="M2 6l4 7 5-7" fill="none" stroke="#7fa0d6" strokeWidth="2.500" /><circle cx="11" cy="4.500" r="3" fill="#b9c3d0" stroke="#222" /></Ico>],
];

function PropRow({ label, children, className = "" }: { label: string; children: ReactNode; className?: string }) {
  return (
    <div className={`flex ${className}`}>
      <span className="flex h-5 min-w-0 flex-1 items-center pl-2 pt-[2px]">{label}</span>
      {children}
    </div>
  );
}

function Properties() {
  return (
    <section className="relative flex min-h-0 flex-1 flex-col bg-[#727272]">
      <nav className="flex h-[27px] shrink-0 items-center border-b border-[#858585] bg-[#6a6a6a] pl-[9px]">
        <Row className="mr-2"><Drop icon={<PropsIcon />} label="Editor type" /></Row>
        <Row>
          {CONTEXT_TABS.map(([name, icon], i) => (
            <IconBtn key={name} icon={i ? <span className="opacity-80">{icon}</span> : icon} label={name} className={i ? DARK : BLUE} />
          ))}
        </Row>
      </nav>
      <div className="flex min-h-0 flex-1 overflow-hidden">
        <div className="min-w-0 flex-1 overflow-hidden pl-1 pr-[5px]">
          <div className="flex h-9 items-center gap-[5px] pl-[5px] pt-px"><PinIcon /><SceneIcon /><span className="pl-[2px] pt-[2px]">Scene</span></div>
          <Panel title="Render" inset="px-1">
            <Row>
              {([["Render", <CameraIcon spark />], ["Animation", <ClapIcon />], ["Audio", <SpeakerIcon />]] as [string, ReactNode][]).map(([n, icon]) => (
                <button key={n} className={`flex h-5 w-0 flex-1 items-center pl-1 ${BTN}`}>{icon}<span className="flex-1 pr-[6px] pt-[2px] text-center">{n}</span></button>
              ))}
            </Row>
            <PropRow label="Display:" className="mt-[5px]">
              <Row className="w-[219px]">
                <Select value="Image Editor" label="Display" className="flex-1" />
                <IconBtn icon={<LockIcon open />} label="Lock interface" />
              </Row>
            </PropRow>
            <PropRow label="Feature Set:" className="mt-[5px]"><Select value="Supported" label="Feature Set" className={`w-[224px] rounded-[5px] ${EDGE}`} /></PropRow>
            <PropRow label="Device:" className="mt-[5px]"><Select value="GPU Compute" label="Device" className={`w-[218px] rounded-[5px] ${EDGE}`} /></PropRow>
          </Panel>
          <Panel title="Dimensions" inset="px-1">
            <Row>
              <Select value="Render Presets" label="Render Presets" className="flex-1" />
              <IconBtn icon={<PlusIcon />} label="Add preset" />
              <IconBtn icon={<MinusIcon />} label="Remove preset" />
            </Row>
            <div className="mt-[5px] grid grid-cols-2 gap-2">
              <div>
                <Label>Resolution:</Label>
                <Stack round="rounded-[9px]">
                  <Num label="X:" value="1920 px" />
                  <Num label="Y:" value="1080 px" />
                  <TextBtn tone="bg-[#7c7c7c]" className="w-full">100%</TextBtn>
                </Stack>
                <Label>Aspect Ratio:</Label>
                <Stack round="rounded-[9px]">
                  <Num label="X:" value="1.000" />
                  <Num label="Y:" value="1.000" />
                </Stack>
                <div className="mt-[2px] flex">
                  <Check label="Border" className="w-[85px]" />
                  <Check label="Crop" dim />
                </div>
              </div>
              <div>
                <Label>Frame Range:</Label>
                <Stack round="rounded-[9px]">
                  <Num label="Start Frame:" value="1" />
                  <Num label="End Frame:" value="250" />
                  <Num label="Frame Step:" value="1" />
                </Stack>
                <Label>Frame Rate:</Label>
                <Select value="24 fps" label="Frame Rate" className={`rounded-[5px] ${EDGE}`} />
                <Label>Time Remapping:</Label>
                <Row round="rounded-full">
                  <Num label="Old:" value="100" className="flex-1" />
                  <Num label="New:" value="100" className="flex-1" />
                </Row>
              </div>
            </div>
          </Panel>
          <Panel title="Metadata" closed />
          <Panel title="Output" inset="px-1">
            <Row>
              <input aria-label="Output path" defaultValue="/tmp\" className={`h-5 w-0 flex-1 pl-[7px] pt-[2px] outline-none ${NUM}`} />
              <IconBtn icon={<FolderIcon />} label="Browse folder" />
            </Row>
            <div className="mt-[5px] grid grid-cols-2 gap-x-2 gap-y-[2px]">
              <Check label="Overwrite" checked />
              <Check label="File Extensions" checked />
              <Check label="Placeholders" />
              <Check label="Cache Result" />
            </div>
            <div className="mt-1 grid grid-cols-2 gap-x-2">
              <Select value="PNG" label="File format" icon={<ImageIcon />} className={`rounded-[5px] ${EDGE}`} />
              <Row>
                <TextBtn tone={DARK} className="flex-1">BW</TextBtn>
                <TextBtn tone={DARK} className="flex-1">RGB</TextBtn>
                <TextBtn tone={BLUE} className="flex-1">RGBA</TextBtn>
              </Row>
            </div>
            <PropRow label="Color Depth:" className="mt-[2px]">
              <Row className="w-[218px]">
                <TextBtn tone={BLUE}>8</TextBtn>
                <TextBtn tone={DARK}>16</TextBtn>
              </Row>
            </PropRow>
            <label className={`relative mt-[2px] flex h-5 items-center justify-between overflow-hidden rounded-full px-[14px] ${NUM} ${EDGE}`}>
              <span className="absolute inset-y-0 left-0 w-[17%] bg-[#808080]" />
              <span className="relative pt-[2px]">Compression:</span>
              <input aria-label="Compression" defaultValue="15%" className="relative w-12 bg-transparent pt-[2px] text-right outline-none" />
            </label>
            <div className="h-[3px]" />
          </Panel>
          <div className="border-t border-[#3f3f3f]" />
        </div>
        <Scroll className="mb-1 mr-[3px] mt-[5px]" thumb="h-[306px]" />
      </div>
      <Corner className="right-0 top-0" />
      <CornerLow />
    </section>
  );
}

/* ---------- windows taskbar ---------- */

function Office({ letter, dark, light }: { letter: string; dark: string; light: string }) {
  return (
    <svg width="32" height="30" viewBox="0 0 32 30" aria-hidden="true">
      <rect x="10" y="1" width="21" height="28" rx="1.500" fill={light} />
      <path d="M20 1h11v14H20z" fill="#fff" fillOpacity=".22" />
      <path d="M10 20h21v9H10z" fill="#000" fillOpacity=".22" />
      <rect x="1" y="7" width="16" height="16" rx="1" fill={dark} />
      <text x="9" y="20" textAnchor="middle" fontSize="13" fontWeight="700" fill="#fff" fontFamily="Open Sans, Noto Sans, sans-serif">{letter}</text>
    </svg>
  );
}

const APPS: { name: string; box?: string; icon: ReactNode }[] = [
  {
    name: "Store",
    icon: (
      <svg width="30" height="30" viewBox="0 0 30 30"><path d="M0 0h30v30H0z" fill="#118a10" /><path d="M4 11l20-2 1 15-19-1z" fill="#fff" /><path d="M9 11q1-7 5-6 4 1 5 5" fill="none" stroke="#fff" strokeWidth="1.500" /><path d="M9 13l5-.5v4H9zM15 12.500l6-.5v4.500h-6zM9 17.500h5v4l-5-.5zM15 17.500h6V22l-6-.5z" fill="#118a10" /></svg>
    ),
  },
  {
    name: "File Explorer",
    box: "border border-[#b0a597] bg-[#7d705d]",
    icon: (
      <svg width="32" height="30" viewBox="0 0 32 30"><path d="M2 3h9l2 3h8l2 3h7v17H2z" fill="#eccb6a" stroke="#c9a94d" /><path d="M5 1h5v3H5z" fill="#3f8a3f" /><path d="M22 6h5v3h-5z" fill="#b4543c" /><path d="M2 9h28v17H2z" fill="#fae9a6" /><path d="M4 29l2-12h20l2 12h-6l-1-5H11l-1 5z" fill="#a9dcf3" stroke="#5b9fc7" /></svg>
    ),
  },
  {
    name: "Firefox",
    icon: (
      <svg width="30" height="30" viewBox="0 0 30 30"><circle cx="15" cy="16" r="14" fill="#e8432e" /><path d="M19 1q10 6 10 15a13 13 0 0 1-20 11q12 3 14-7Q25 10 19 1z" fill="#ffcb2e" /><circle cx="14" cy="12" r="8" fill="#2a4f96" /><path d="M1 12q2-6 5-8 1 3 4 4l3 4-4 3q3 5 8 2-2 7-9 5-6-3-7-10z" fill="#f5672c" /><path d="M19 1q7 5 5 14l-3-4q0-6-2-10z" fill="#ffe14a" /></svg>
    ),
  },
  {
    name: "Steam",
    icon: (
      <svg width="30" height="30" viewBox="0 0 30 30"><circle cx="15" cy="15" r="15" fill="#14305a" /><path d="M0 17l10 4 7-7" stroke="#fff" strokeWidth="5" fill="none" /><circle cx="20" cy="11" r="5" fill="#14305a" stroke="#fff" strokeWidth="2.500" /><circle cx="10" cy="21" r="4" fill="#fff" stroke="#14305a" /></svg>
    ),
  },
  {
    name: "Internet Explorer",
    icon: (
      <svg width="32" height="30" viewBox="0 0 32 30"><path d="M24 22a9 9 0 1 1 1-6H8" fill="none" stroke="#4cc0ee" strokeWidth="5" /><path d="M5 28Q-1 25 8 13 22-1 28 1q3 2-1 9" fill="none" stroke="#f7ca3d" strokeWidth="2.500" /></svg>
    ),
  },
  {
    name: "Chromium",
    icon: (
      <svg width="30" height="30" viewBox="0 0 30 30"><circle cx="15" cy="15" r="15" fill="#a5c1f2" /><path d="M15 15L2 7.500A15 15 0 0 0 14 30l7.500-11.500z" fill="#7ba3e8" /><path d="M15 15H8L2 7.500Q8 0 15 0t13 7.500H15z" fill="#5b84d1" /><circle cx="15" cy="15" r="7" fill="#fff" /><circle cx="15" cy="15" r="5.500" fill="#4a7be0" /></svg>
    ),
  },
  {
    name: "Chrome",
    box: "border border-[#b0a597] bg-[#7d705d]",
    icon: (
      <svg width="30" height="30" viewBox="0 0 30 30"><circle cx="15" cy="15" r="15" fill="#fbc924" /><path d="M15 15L2 7.500A15 15 0 0 0 14 30l7.500-11.500z" fill="#2ea04f" /><path d="M15 15H8L2 7.500Q8 0 15 0t13 7.500H15z" fill="#e14536" /><circle cx="15" cy="15" r="7" fill="#fff" /><circle cx="15" cy="15" r="5.500" fill="#4688f1" /></svg>
    ),
  },
  { name: "Excel", icon: <Office letter="X" dark="#127a42" light="#27a567" /> },
  {
    name: "OneNote",
    icon: (
      <svg width="30" height="30" viewBox="0 0 30 30"><path d="M14 4h11v22H14z" fill="#fff" stroke="#80397b" strokeWidth="1.500" /><path d="M18 9h6M18 13h6M18 17h6M18 21h6" stroke="#80397b" /><path d="M25 5h3v5h-3zM25 12h3v5h-3zM25 19h3v5h-3z" fill="#fff" stroke="#80397b" /><path d="M0 3l18-3v30L0 27z" fill="#80397b" /><text x="9" y="20" textAnchor="middle" fontSize="14" fontWeight="700" fill="#fff" fontFamily="Open Sans, Noto Sans, sans-serif">N</text></svg>
    ),
  },
  {
    name: "Outlook",
    icon: (
      <svg width="32" height="30" viewBox="0 0 32 30"><path d="M10 1h18v15H10z" fill="#1d8ad8" /><path d="M19 1h9v8h-9z" fill="#4fc0f0" /><path d="M8 14l12 7 12-7v15H8z" fill="#2a9de4" /><path d="M32 14v15L18 20z" fill="#1670b8" /><rect x="1" y="7" width="16" height="16" rx="1" fill="#0f6cbd" /><text x="9" y="20" textAnchor="middle" fontSize="13" fontWeight="700" fill="#fff" fontFamily="Open Sans, Noto Sans, sans-serif">O</text></svg>
    ),
  },
  {
    name: "PowerPoint",
    icon: (
      <svg width="32" height="30" viewBox="0 0 32 30"><circle cx="18" cy="15" r="14" fill="#e8613b" /><path d="M18 1a14 14 0 0 1 14 14H18z" fill="#f99572" /><rect x="1" y="7" width="16" height="16" rx="1" fill="#c13b1b" /><text x="9" y="20" textAnchor="middle" fontSize="13" fontWeight="700" fill="#fff" fontFamily="Open Sans, Noto Sans, sans-serif">P</text></svg>
    ),
  },
  { name: "Word", icon: <Office letter="W" dark="#1953ab" light="#2f7ad6" /> },
  { name: "Blender", box: "border border-[#efeae2] bg-gradient-to-r from-[#aaa295] to-[#cbc5ba]", icon: <BlenderLogo s={32} /> },
];

function Taskbar() {
  return (
    <footer className="relative flex h-10 shrink-0 items-center overflow-hidden bg-gradient-to-r from-[#604f3a] via-[#5d4c34] to-[#544530]">
      <div className="absolute left-[530px] h-14 w-32 rounded-full bg-[#8f6f49] blur-[3px]" />
      <div className="absolute left-[597px] h-24 w-[255px] rounded-l-[40px] bg-[#ab9f88] blur-[2px]" />
      <div className="absolute left-[850px] h-24 w-20 bg-[#5d4c34]" />
      <div className="absolute left-[1283px] top-1 h-12 w-[54px] rounded-full bg-[#a37141] blur-[2px]" />
      <div className="absolute -top-6 left-[1440px] h-16 w-[66px] rounded-full bg-[#7d5c3a] blur-[2px]" />
      <button aria-label="Start" className="relative flex h-10 w-[50px] items-center justify-center">
        <svg width="28" height="26" viewBox="0 0 28 26"><path d="M0 4l12-1.500V12.500H0zM13 2.300L28 0v12.500H13zM0 13.500h12V24L0 22.300zM13 13.500h15V26l-15-2z" fill="#fff" /></svg>
      </button>
      {APPS.map((a) => (
        <button key={a.name} aria-label={a.name} className={`relative mx-[2px] flex h-[39px] w-[58px] shrink-0 items-center justify-center ${a.box ?? ""}`}>
          {a.icon}
        </button>
      ))}
      <div className="relative ml-auto flex items-center gap-2 pr-[15px] font-['Open_Sans','Noto_Sans',sans-serif] text-[12px] text-white">
        <svg width="8" height="5" viewBox="0 0 8 5" className="mr-1"><path d="M4 0l4 5H0z" fill="#fff" /></svg>
        <svg width="16" height="16" viewBox="0 0 16 16"><path d="M1 5h2l4-3v12l-4-3H1z" fill="#fff" /><path d="M9 5q2 3 0 6M11 4q3 4 0 8M13 2.500q3.500 5.500 0 11" stroke="#fff" fill="none" /></svg>
        <svg width="16" height="16" viewBox="0 0 16 16"><path d="M5 4h10v7H5zM8 14h5M10.500 11v3M1 2h3v4H1zM2.500 6v8H6" stroke="#fff" strokeWidth="1.300" fill="none" /></svg>
        <svg width="16" height="16" viewBox="0 0 16 16"><path d="M2 1v15" stroke="#fff" strokeWidth="1.500" /><path d="M2 2q4-2 6 0t6 0v6q-4 2-6 0T2 8z" fill="#fff" /><circle cx="11" cy="11" r="4.500" fill="#d12b2b" /><path d="M9 9l4 4M13 9l-4 4" stroke="#fff" strokeWidth="1.300" /></svg>
        <div className="ml-2 pt-[2px] text-center leading-[17px]">
          <div>1:35 PM</div>
          <div>6/10/2019</div>
        </div>
      </div>
    </footer>
  );
}

export default function App() {
  return (
    <div className="flex h-screen w-full flex-col overflow-hidden bg-[#d2aa74] font-['DejaVu_Sans_Condensed','DejaVu_Sans',sans-serif] text-[11px] text-black">
      <TitleBar />
      <div className="mx-2 mb-2 flex min-h-0 flex-1 flex-col">
        <InfoHeader />
        <div className="flex min-h-0 flex-1">
          <div className="flex min-w-0 flex-1 flex-col border-r border-black">
            <div className="flex min-h-0 flex-1 overflow-hidden">
              <ToolShelf />
              <Viewport />
              <SideRegion />
            </div>
            <ViewHeader />
            <Timeline />
          </div>
          <div className="flex w-[367px] shrink-0 flex-col">
            <Outliner />
            <Properties />
          </div>
        </div>
      </div>
      <Taskbar />
    </div>
  );
}
